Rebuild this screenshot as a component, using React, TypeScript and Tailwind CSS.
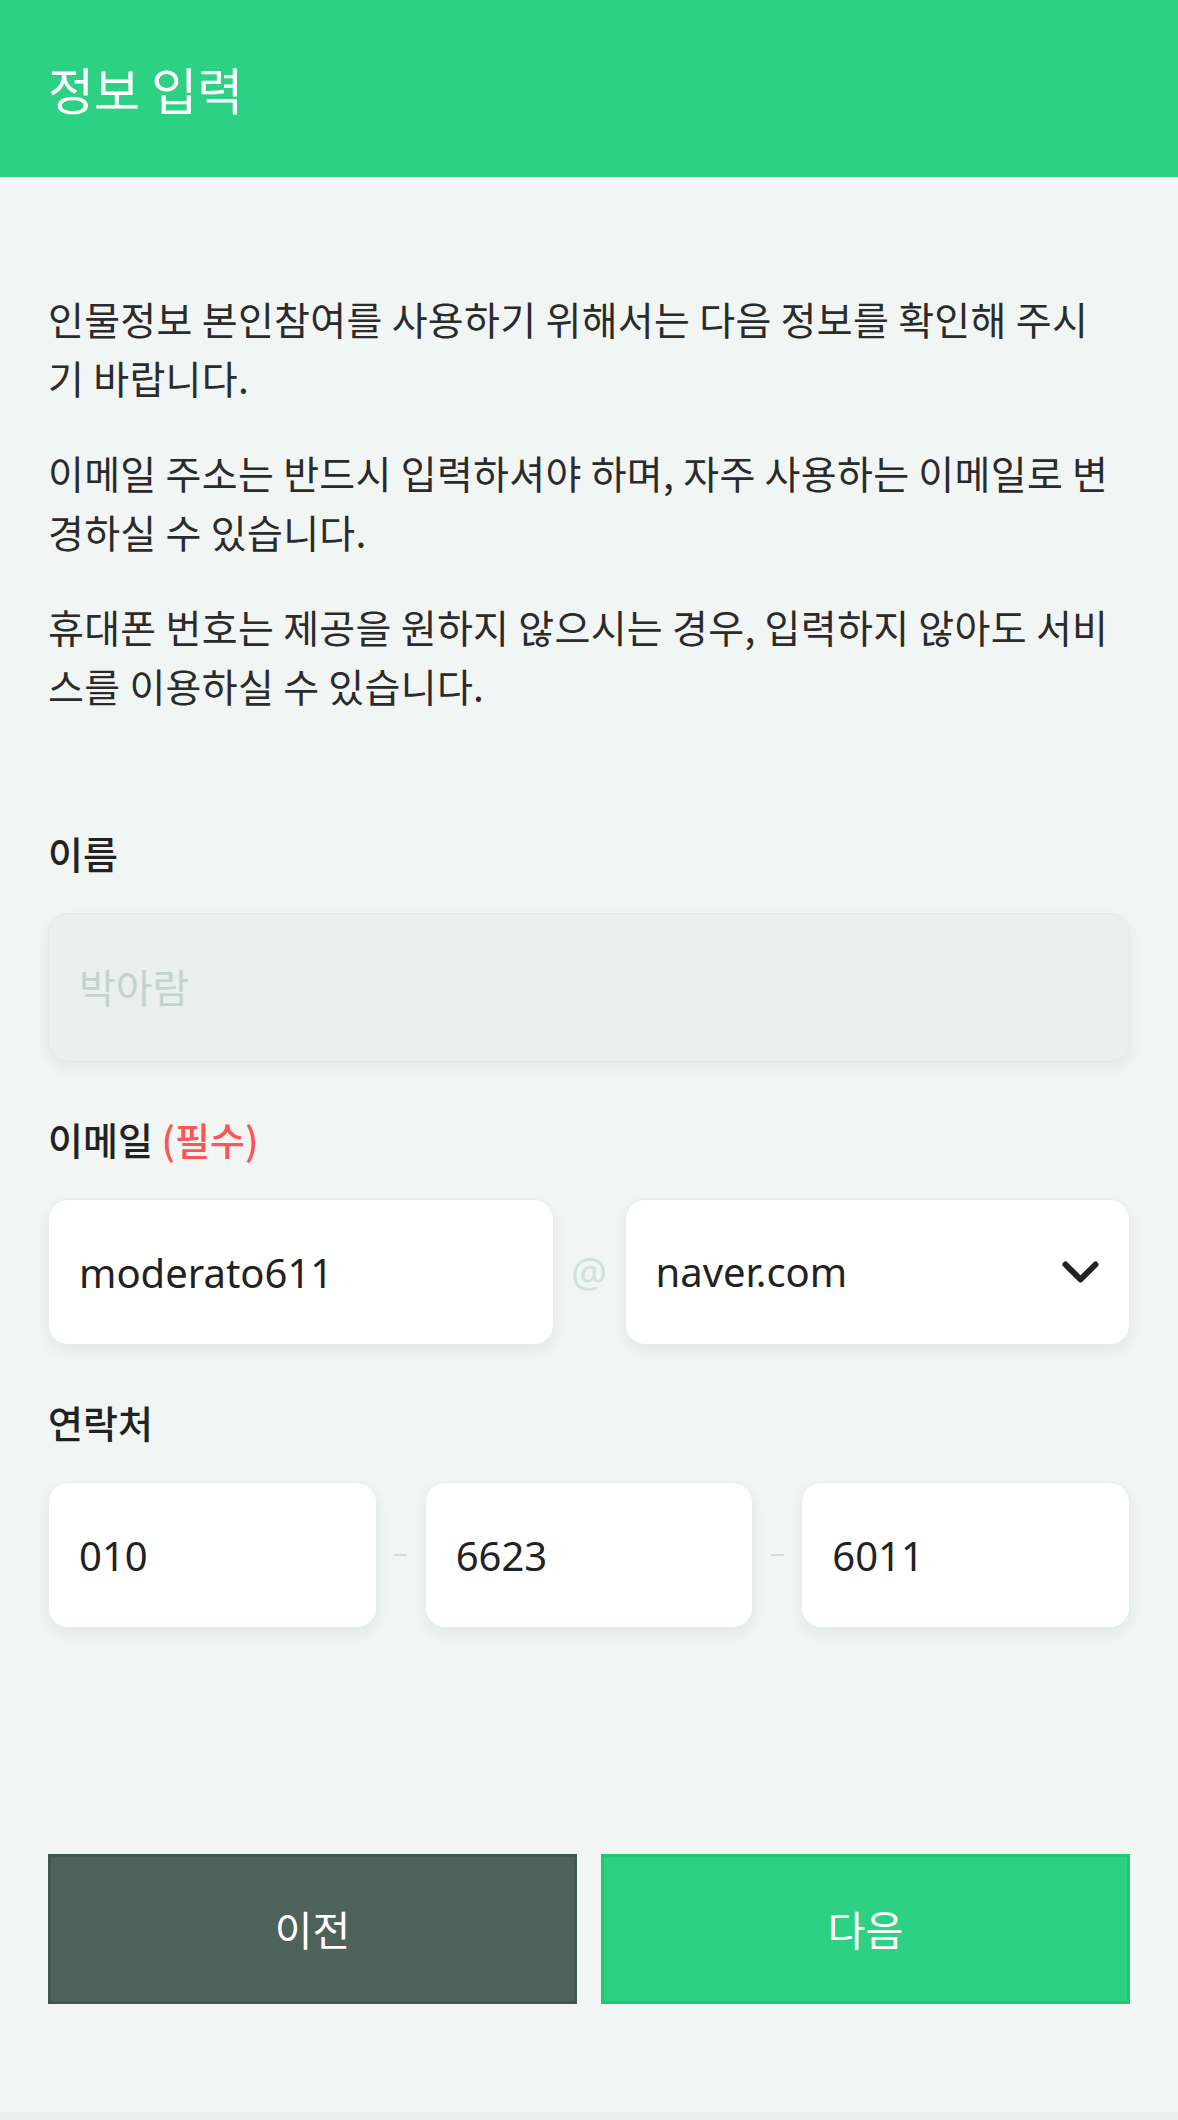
import { ReactNode } from "react";

const boxBase =
  "w-full min-w-0 rounded-[20px] border px-[30px] text-[40px] outline-none shadow-[0_6px_14px_rgba(40,90,70,0.07)] font-['Noto_Sans','Noto_Sans_CJK_KR',sans-serif]";

function Label({ children }: { children: ReactNode }) {
  return (
    <p className="mb-[38px] text-[38px] leading-[44px] font-medium text-[#222]">
      {children}
    </p>
  );
}

function TextBox({ value }: { value: string }) {
  return (
    <input
      readOnly
      value={value}
      className={`${boxBase} h-[146px] flex-1 bg-white border-[#e6eeeb] text-[#222]`}
    />
  );
}

function Dash() {
  return (
    <div className="w-[48px] shrink-0 flex justify-center">
      <span className="block w-[13px] h-[2px] bg-[#cde0da]" />
    </div>
  );
}

export default function App() {
  return (
    <div className="min-h-[2120px] flex flex-col bg-[#f1f5f4] text-[#2b2b2b] font-['Noto_Sans_CJK_KR',sans-serif]">
      {/* Top bar */}
      <header className="h-[177px] shrink-0 flex items-center px-12 bg-[#2cd184]">
        <h1 className="text-[50px] text-white">정보 입력</h1>
      </header>

      <main className="px-12 pt-[112px]">
        {/* Intro */}
        <div className="max-w-[1068px] space-y-[36px] text-[39px] leading-[59px] tracking-[0.3px]">
          <p>
            인물정보 본인참여를 사용하기 위해서는 다음 정보를 확인해 주시기
            바랍니다.
          </p>
          <p>
            이메일 주소는 반드시 입력하셔야 하며, 자주 사용하는 이메일로
            변경하실 수 있습니다.
          </p>
          <p>
            휴대폰 번호는 제공을 원하지 않으시는 경우, 입력하지 않아도
            서비스를 이용하실 수 있습니다.
          </p>
        </div>

        {/* Name */}
        <section className="mt-[116px]">
          <Label>이름</Label>
          <input
            disabled
            placeholder="박아람"
            className={`${boxBase} block h-[149px] bg-[#e9f0ee] border-[#e2eae7] placeholder:text-[#c3d3ce]`}
          />
        </section>

        {/* Email */}
        <section className="mt-[55px]">
          <Label>
            이메일 <span className="text-[#ff5454]">(필수)</span>
          </Label>
          <div className="flex items-center">
            <TextBox value="moderato611" />
            <span className="w-[71px] shrink-0 text-center text-[40px] text-[#cfe3dc] font-['Noto_Sans',sans-serif]">
              @
            </span>
            <div
              className={`${boxBase} h-[146px] flex-1 flex items-center justify-between bg-white border-[#e6eeeb] text-[#222]`}
            >
              <span>naver.com</span>
              <svg width="37" height="23" viewBox="0 0 37 23" fill="none">
                <polyline
                  points="3.5,3.5 18.5,18.5 33.5,3.5"
                  stroke="#222"
                  strokeWidth="6"
                  strokeLinecap="round"
                  strokeLinejoin="round"
                />
              </svg>
            </div>
          </div>
        </section>

        {/* Phone */}
        <section className="mt-[55px]">
          <Label>연락처</Label>
          <div className="flex items-center">
            <TextBox value="010" />
            <Dash />
            <TextBox value="6623" />
            <Dash />
            <TextBox value="6011" />
          </div>
        </section>
      </main>

      {/* Actions */}
      <div className="mt-[226px] px-12 flex gap-6">
        <button className="flex-1 h-[150px] border-[3px] border-[#41574f] bg-[#4c625b] text-[41px] text-white">
          이전
        </button>
        <button className="flex-1 h-[150px] border-[3px] border-[#23c679] bg-[#2cd184] text-[41px] text-white">
          다음
        </button>
      </div>

      <div className="mt-auto h-2 bg-[#ebf0ef]" />
    </div>
  );
}
